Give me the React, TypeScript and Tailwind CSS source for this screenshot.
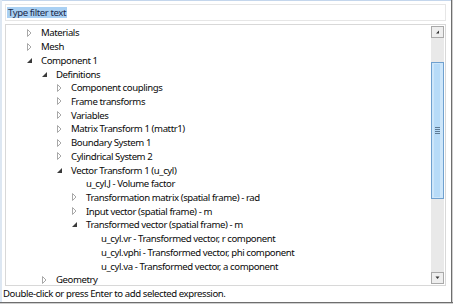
import React from "react";

type Row = { label: string; level: number; kind: "c" | "e" | "l" };

const rows: Row[] = [
  { label: "Materials", level: 0, kind: "c" },
  { label: "Mesh", level: 0, kind: "c" },
  { label: "Component 1", level: 0, kind: "e" },
  { label: "Definitions", level: 1, kind: "e" },
  { label: "Component couplings", level: 2, kind: "c" },
  { label: "Frame transforms", level: 2, kind: "c" },
  { label: "Variables", level: 2, kind: "c" },
  { label: "Matrix Transform 1 (mattr1)", level: 2, kind: "c" },
  { label: "Boundary System 1", level: 2, kind: "c" },
  { label: "Cylindrical System 2", level: 2, kind: "c" },
  { label: "Vector Transform 1 (u_cyl)", level: 2, kind: "e" },
  { label: "u_cyl.J - Volume factor", level: 3, kind: "l" },
  { label: "Transformation matrix (spatial frame) - rad", level: 3, kind: "c" },
  { label: "Input vector (spatial frame) - m", level: 3, kind: "c" },
  { label: "Transformed vector (spatial frame) - m", level: 3, kind: "e" },
  { label: "u_cyl.vr - Transformed vector, r component", level: 4, kind: "l" },
  { label: "u_cyl.vphi - Transformed vector, phi component", level: 4, kind: "l" },
  { label: "u_cyl.va - Transformed vector, a component", level: 4, kind: "l" },
  { label: "Geometry", level: 1, kind: "c" },
];

const padLeft = ["pl-[20px]", "pl-[35px]", "pl-[50px]", "pl-[65px]", "pl-[80px]"];

function Collapsed() {
  return (
    <svg width="6" height="8" viewBox="0 0 6 8">
      <path d="M1.5 0.5 L5 4 L1.5 7.5 Z" fill="#ffffff" stroke="#a8a8a8" strokeWidth="1" />
    </svg>
  );
}

function Expanded() {
  return (
    <svg width="7" height="7" viewBox="0 0 7 7">
      <path d="M6 1 L6 6 L1 6 Z" fill="#3a3a3a" />
    </svg>
  );
}

export default function App() {
  return (
    <div
      className="relative w-[453px] h-[304px] bg-white overflow-hidden text-[9.6px] tracking-[-0.42px] text-[#0a0a0a]"
      style={{ fontFamily: '"Noto Sans", "Open Sans", sans-serif' }}
    >
      <div className="absolute left-0 top-0 w-[453px] h-px bg-[#c4d6ec]" />
      <div className="absolute left-0 top-0 w-[2px] h-[304px] bg-[#dde7f2]" />
      <div className="absolute right-0 top-0 w-[2px] h-[304px] bg-[#6e6e6e] border-r border-[#cfcfcf]" />
      <div className="absolute left-0 bottom-0 w-[453px] h-[2px] bg-[#6e6e6e] border-b border-[#cfcfcf]" />

      <div className="flex flex-col pl-[5px] pr-[7px] pt-[4px]">
        <div className="h-[17px] border border-[#e6e6e6] flex items-center pl-[1px]">
          <span className="bg-[#a9d0f3] text-[#1c2a4a] leading-[11px] h-[11px] px-[1px]">Type filter text</span>
        </div>
        <div className="mt-[3px] h-[262px] border border-[#d8d8d8] flex">
          <div className="flex-1 overflow-hidden pt-[1px]">
            {rows.map((r, i) => (
              <div key={i} className={`h-[13.72px] flex items-center whitespace-nowrap ${padLeft[r.level]}`}>
                <div className="w-[15px] flex items-center">
                  {r.kind === "c" && <Collapsed />}
                  {r.kind === "e" && <Expanded />}
                </div>
                <span className="leading-[13px]">{r.label}</span>
              </div>
            ))}
          </div>
          <div className="w-[13px] mr-[1px] my-[1px] bg-[#e9e9e9] flex flex-col">
            <div className="h-[12px] border border-[#a9a9a9] bg-[#eeeeee] flex items-center justify-center">
              <svg width="5" height="4" viewBox="0 0 5 4"><path d="M4 0.5 L4 3.5 L1 3.5 Z" fill="#333" /></svg>
            </div>
            <div className="h-[24px]" />
            <div className="h-[137px] border border-[#6fa0cf] bg-[#cde6fa] flex items-center justify-center relative">
              <div className="absolute left-[2px] top-[1px] bottom-[1px] w-[6px] bg-[#b7dbf8]" />
              <div className="relative flex flex-col gap-[1px]">
                <div className="w-[5px] h-px bg-[#5d7a95]" />
                <div className="w-[5px] h-px bg-[#5d7a95]" />
                <div className="w-[5px] h-px bg-[#5d7a95]" />
                <div className="w-[5px] h-px bg-[#5d7a95]" />
              </div>
            </div>
            <div className="flex-1" />
            <div className="h-[12px] border border-[#a9a9a9] bg-[#eeeeee] flex items-center justify-center">
              <svg width="5" height="4" viewBox="0 0 5 4"><path d="M0.5 0.5 L4.5 0.5 L2.5 3 Z" fill="#333" /></svg>
            </div>
          </div>
        </div>
      </div>
      <div className="pl-[3px] pt-[1px] leading-[14px] text-[#0a0a0a]">Double-click or press Enter to add selected expression.</div>
    </div>
  );
}
